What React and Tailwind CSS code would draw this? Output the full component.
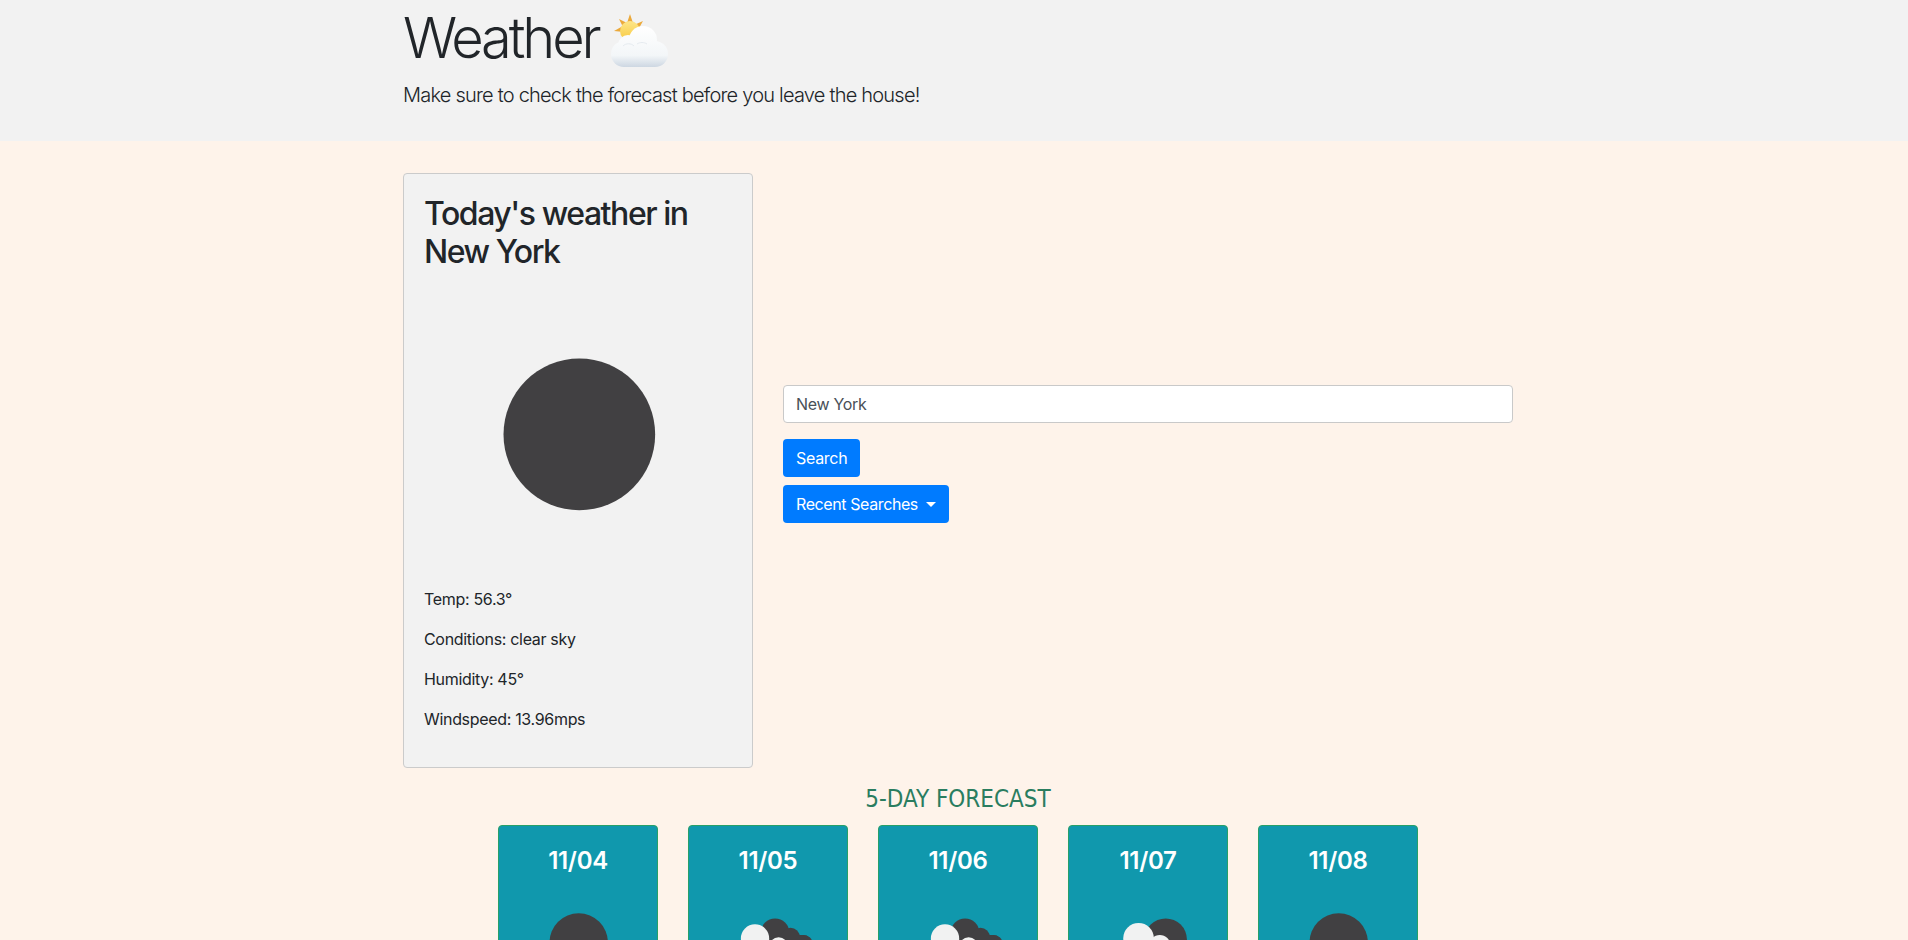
const dates = [
  { d: "11/04", k: "sun" },
  { d: "11/05", k: "broken" },
  { d: "11/06", k: "broken" },
  { d: "11/07", k: "few" },
  { d: "11/08", k: "sun" },
];

function Emoji() {
  return (
    <svg width="80" height="70" viewBox="0 0 80 70" className="block shrink-0 -mt-[5px]">
      <defs>
        <linearGradient id="cl" gradientUnits="userSpaceOnUse" x1="0" y1="26" x2="0" y2="67">
          <stop offset="0" stopColor="#ffffff" />
          <stop offset="0.72" stopColor="#f3f6f8" />
          <stop offset="1" stopColor="#cdd7e2" />
        </linearGradient>
        <linearGradient id="sn" x1="0" y1="0" x2="0" y2="1">
          <stop offset="0" stopColor="#fde68a" />
          <stop offset="1" stopColor="#f8c93f" />
        </linearGradient>
      </defs>
      <g fill="#eba93b">
        <path d="M31 14l3 9h-6z" />
        <path d="M20 19l8 4-4 4z" />
        <path d="M44 21l-5 9-4-5z" />
        <path d="M15 31l9-5 1 6z" />
      </g>
      <circle cx="31" cy="31" r="10" fill="url(#sn)" />
      <g fill="url(#cl)">
        <circle cx="44" cy="40" r="14" />
        <circle cx="29" cy="45" r="10" />
        <circle cx="25" cy="54" r="13" />
        <circle cx="56" cy="54" r="13" />
        <rect x="24" y="44" width="32" height="23" />
      </g>
      <path d="M24 46c3-3 8-3 11 0M38 44c3-2 7-2 10 0" fill="none" stroke="#e6ebf0" strokeWidth="1" />
    </svg>
  );
}

function Icon({ kind, size, soft }) {
  const dark = "#414042";
  const light = "#f1f2f2";
  return (
    <svg width={size} height={size} viewBox="0 0 100 100" className={soft ? "block blur-[0.7px]" : "block"}>
      {kind === "sun" && <circle cx="50.600" cy="50.300" r="24.700" fill={dark} />}
      {kind === "few" && (
        <>
          <circle cx="65" cy="48" r="18" fill={dark} />
          <circle cx="42" cy="47" r="13" fill={light} />
          <circle cx="60" cy="53" r="9" fill={light} />
          <rect x="28" y="54" width="46" height="16" rx="8" fill={light} />
        </>
      )}
      {kind === "broken" && (
        <>
          <circle cx="56" cy="42" r="12" fill={dark} />
          <circle cx="69" cy="46" r="8" fill={dark} />
          <circle cx="80" cy="51" r="7" fill={dark} />
          <rect x="50" y="44" width="38" height="24" rx="8" fill={dark} />
          <circle cx="39" cy="47" r="12" fill={light} />
          <circle cx="59" cy="54" r="8" fill={light} />
          <rect x="24" y="54" width="44" height="16" rx="8" fill={light} />
        </>
      )}
    </svg>
  );
}

export default function App() {
  return (
    <div className="h-[940px] overflow-hidden bg-[#fef3ea] text-[#212529] font-['Inter','Liberation_Sans',sans-serif]">
      <header className="bg-[#f2f2f2] h-[141px] pt-[5px]">
        <div className="ml-[403px] w-[1110px]">
          <h1 className="text-[56px] leading-[1.2] font-light mb-2 tracking-[-3.1px] flex items-start">
            <span>Weather</span>
            <Emoji />
          </h1>
          <p className="text-[20px] leading-[30px] font-light tracking-[-0.78px]">
            Make sure to check the forecast before you leave the house!
          </p>
        </div>
      </header>

      <main className="ml-[403px] w-[1110px] pt-8">
        <div className="flex gap-[30px]">
          <section className="w-[350px] shrink-0 bg-[#f2f2f2] border border-[#cbcbcb] rounded-[4px] px-5 pt-[21px] pb-5">
            <h2 className="text-[32px] leading-[1.2] font-[550] mb-2 tracking-[-1.45px]">Today's weather in New York</h2>
            <Icon kind="sun" size={307} soft />
            <p className="mb-4 leading-6 tracking-[-0.32px]">Temp: 56.3°</p>
            <p className="mb-4 leading-6 tracking-[-0.32px]">Conditions: clear sky</p>
            <p className="mb-4 leading-6 tracking-[-0.32px]">Humidity: 45°</p>
            <p className="mb-4 leading-6 tracking-[-0.32px]">Windspeed: 13.96mps</p>
          </section>

          <section className="flex-1 flex flex-col justify-center items-start pb-8">
            <input
              readOnly
              value="New York"
              className="w-full h-[38px] bg-white border border-[#c9c9c9] rounded-[4px] px-3 text-[#495057] tracking-[-0.3px] outline-none mb-4"
            />
            <button className="h-[38px] px-[13px] rounded-[4px] bg-[#007bff] text-white tracking-[-0.3px] mb-2">Search</button>
            <button className="h-[38px] px-[13px] rounded-[4px] bg-[#007bff] text-white tracking-[-0.4px] flex items-center">
              Recent Searches
              <span className="ml-2 w-0 h-0 border-x-[5px] border-x-transparent border-t-[5px] border-t-white" />
            </button>
          </section>
        </div>

        <h3 className="mt-[17px] mb-[11px] text-center text-[24px] leading-[29px] text-[#2a7d5f] font-['DejaVu_Sans',sans-serif] [font-stretch:condensed]">
          5-DAY FORECAST
        </h3>

        <div className="flex justify-center gap-[30px]">
          {dates.map((c) => (
            <div key={c.d} className="w-[160px] h-[240px] shrink-0 bg-[#1098ad] border border-[#28a068] rounded-[4px] px-5 pt-[21px] text-white">
              <h4 className="text-[24px] leading-[1.2] font-semibold tracking-[-0.3px] text-center mb-[7px]">{c.d}</h4>
              <Icon kind={c.k} size={118} />
            </div>
          ))}
        </div>
      </main>
    </div>
  );
}
